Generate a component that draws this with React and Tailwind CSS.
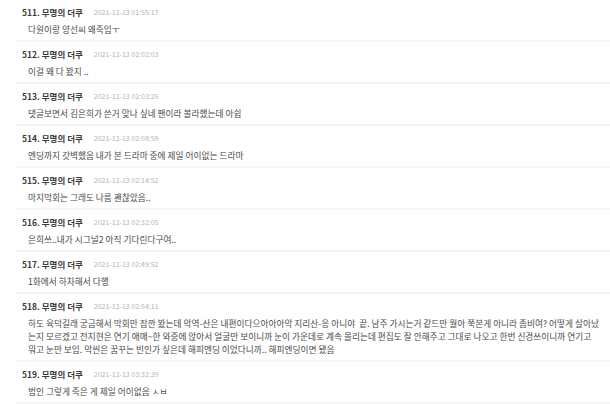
const comments = [
  { no: 511, date: '2021-12-13 01:55:17', lines: ['다원이랑 양선씨 왜죽임ㅜ'] },
  { no: 512, date: '2021-12-13 02:02:03', lines: ['이걸 왜 다 봤지 ..'] },
  { no: 513, date: '2021-12-13 02:03:25', lines: ['댓글보면서 김은희가 쓴거 맞나 싶네 팬이라 볼라했는데 아쉽'] },
  { no: 514, date: '2021-12-13 02:08:59', lines: ['엔딩까지 갓벽했음 내가 본 드라마 중에 제일 어이없는 드라마'] },
  { no: 515, date: '2021-12-13 02:14:52', lines: ['마지막회는 그래도 나름 괜찮았음..'] },
  { no: 516, date: '2021-12-13 02:32:05', lines: ['은희쓰..내가 시그널2 아직 기다린다구여..'] },
  { no: 517, date: '2021-12-13 02:49:52', lines: ['1화에서 하차해서 다행'] },
  {
    no: 518,
    date: '2021-12-13 02:54:11',
    lines: [
      '하도 육덕길래 궁금해서 막회만 잠깐 봤는데 악역-산은 내편이다으아아아악 지리산-응 아니야  끝. 남주 가시는거 같드만 뭘아 쭉본게 아니라 좀비여? 어떻게 살아났',
      '는지 모르겠고 전지현은 연기 애매~한 와중에 앉아서 얼굴만 보이니까 눈이 가운데로 계속 몰리는데 편집도 잘 안해주고 그대로 나오고 한번 신경쓰이니까 연기고',
      '뭐고 눈만 보임. 악씬은 꿈꾸는 빈인가 싶은데 해피엔딩 이었다니까.. 해피엔딩이면 됐음',
    ],
  },
  { no: 519, date: '2021-12-13 03:32:39', lines: ['범인 그렇게 죽은 게 제일 어이없음 ㅅㅂ'] },
];

function Comment({ item }) {
  return (
    <li className="pt-[6px] pb-[4px] border-b-2 border-[#f5f5f5]">
      <div className="flex items-center h-[12px] pl-[6px]">
        <span className="text-[8.5px] leading-[12px] font-bold text-[#3a3a3a]">
          {item.no}. 무명의 더쿠
        </span>
        <span className="ml-[11px] text-[7px] leading-[12px] text-[#b4b4b4]">
          {item.date}
        </span>
      </div>
      <div className="mt-[5px] pl-[12px] text-[8.7px] leading-[13px] text-[#4a4a4a]">
        {item.lines.map((line, i) => (
          <p key={i} className="whitespace-pre overflow-hidden">
            {line}
          </p>
        ))}
      </div>
    </li>
  );
}

function App() {
  return (
    <div className="w-[610px] h-[404px] overflow-hidden bg-white font-['Noto_Sans_CJK_KR',sans-serif]">
      <ul className="ml-[16px]">
        {comments.map((c) => (
          <Comment key={c.no} item={c} />
        ))}
      </ul>
    </div>
  );
}

export default App;
